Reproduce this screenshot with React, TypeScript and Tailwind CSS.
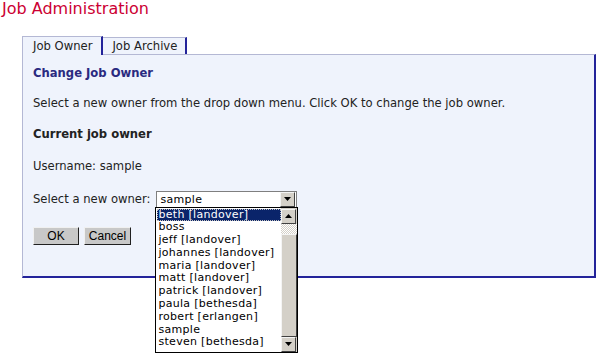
import React from "react";

const items = [
  "beth [landover]",
  "boss",
  "jeff [landover]",
  "johannes [landover]",
  "maria [landover]",
  "matt [landover]",
  "patrick [landover]",
  "paula [bethesda]",
  "robert [erlangen]",
  "sample",
  "steven [bethesda]",
];

function DownArrow() {
  return (
    <svg width="7" height="4" viewBox="0 0 7 4">
      <path d="M0 0H7L3.5 4Z" fill="#000" />
    </svg>
  );
}
function UpArrow() {
  return (
    <svg width="7" height="4" viewBox="0 0 7 4">
      <path d="M0 4H7L3.5 0Z" fill="#000" />
    </svg>
  );
}

function ScrollBtn({ up }: { up?: boolean }) {
  return (
    <div className="w-[15px] h-[15px] bg-[#d4d0c8] border border-t-[#f4f4f4] border-l-[#f4f4f4] border-r-[#404040] border-b-[#404040] flex items-center justify-center">
      {up ? <UpArrow /> : <DownArrow />}
    </div>
  );
}

export default function App() {
  return (
    <div className="w-[600px] h-[353px] bg-white relative overflow-hidden font-['DejaVu_Sans',sans-serif] text-[11.6px] text-[#222]">
      <div className="pl-[2px] pt-[0px] h-[18px] leading-[18px] text-[16px] text-[#cc0033]">
        Job Administration
      </div>
      <div className="ml-[22px] mt-[17px] w-[574px]">
        <div className="flex items-end h-[19px]">
          <div className="h-[19px] pl-[10px] pr-[9px] bg-[#eff3fc] border-l border-t border-[#b4b8d4] border-r-2 border-r-[#23239a] leading-[18px] relative z-10 -mb-px">
            Job Owner
          </div>
          <div className="h-[17px] pl-[9px] pr-[8px] bg-[#eff3fc] border-t border-[#b4b8d4] border-r-2 border-r-[#23239a] leading-[16px]">
            Job Archive
          </div>
        </div>
        <div className="h-[224px] bg-[#eff3fc] border-l border-t border-[#b4b8d4] border-r-2 border-b-2 border-r-[#23239a] border-b-[#23239a] pl-[10px] pt-[11px]">
          <div className="font-bold text-[#2a2a80] leading-[14px]">Change Job Owner</div>
          <div className="mt-[16px] leading-[14px]">
            Select a new owner from the drop down menu. Click OK to change the job owner.
          </div>
          <div className="mt-[17px] font-bold leading-[14px]">Current job owner</div>
          <div className="mt-[18px] leading-[14px]">Username: sample</div>
          <div className="mt-[18px] flex items-center h-[16px]">
            <span className="leading-[14px]">Select a new owner:</span>
            <div className="ml-[6px] relative w-[141px] h-[17px] bg-white border border-[#7f7f7f] flex items-center">
              <span className="pl-[3px] font-['DejaVu_Sans',sans-serif] text-[11px] tracking-[0.3px] text-black leading-[15px] flex-1">
                sample
              </span>
              <div className="mr-px">
                <ScrollBtn />
              </div>
              <div className="absolute left-[-2px] top-[15px] w-[143px] h-[146px] bg-white border border-black flex z-20">
                <div className="flex-1 flex flex-col pt-px pl-px font-['DejaVu_Sans',sans-serif] text-[11px] tracking-[0.3px] text-black">
                  {items.map((it, i) => (
                    <div
                      key={it}
                      className={
                        "h-[12.8px] leading-[12.8px] pl-[1px] whitespace-nowrap " +
                        (i === 0 ? "bg-[#0a246a] text-white outline-1 outline-dotted outline-[#c0c0c0] -outline-offset-1" : "")
                      }
                    >
                      {it}
                    </div>
                  ))}
                </div>
                <div className="w-[16px] flex flex-col bg-[#d4d0c8] pt-px">
                  <ScrollBtn up />
                  <div className="h-[10px] bg-[repeating-conic-gradient(#ffffff_0%_25%,#d4d0c8_0%_50%)] bg-[length:2px_2px]" />
                  <div className="flex-1 bg-[#d4d0c8] border border-t-[#f4f4f4] border-l-[#f4f4f4] border-r-[#404040] border-b-[#404040]" />
                  <ScrollBtn />
                </div>
              </div>
            </div>
          </div>
          <div className="mt-[20px] flex gap-[5px] font-['Liberation_Sans',sans-serif] text-[12px] text-black">
            <div className="w-[46px] h-[18px] bg-[#c8c8c8] border border-t-[#f0f0f0] border-l-[#f0f0f0] border-r-[#202020] border-b-[#202020] flex items-center justify-center leading-none">
              OK
            </div>
            <div className="w-[47px] h-[18px] bg-[#c8c8c8] border border-t-[#f0f0f0] border-l-[#f0f0f0] border-r-[#202020] border-b-[#202020] flex items-center justify-center leading-none">
              Cancel
            </div>
          </div>
        </div>
      </div>
    </div>
  );
}
